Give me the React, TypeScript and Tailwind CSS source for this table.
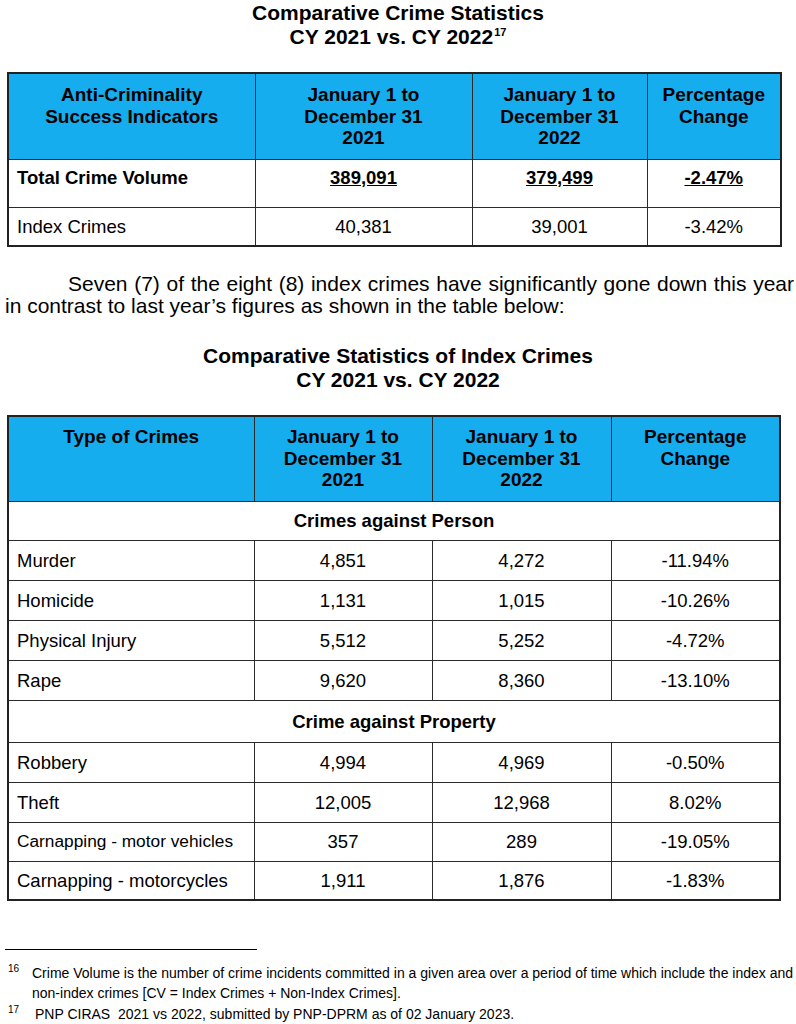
import React from "react";

const th =
  "border border-[#2b2b2b] bg-[#16adee] align-top text-center font-bold text-[19px] leading-[21.5px] text-black";
const td = "border border-[#2b2b2b] text-[18.5px] leading-[21px] text-black align-middle";

function Table1() {
  return (
    <table className="ml-[7px] mt-[23px] w-[773px] table-fixed border-collapse border-2 border-[#222]">
      <colgroup>
        <col className="w-[247px]" />
        <col className="w-[217px]" />
        <col className="w-[175px]" />
        <col className="w-[134px]" />
      </colgroup>
      <thead>
        <tr className="h-[86px]">
          <th className={`${th} pt-[10px]`}>
            Anti-Criminality
            <br />
            Success Indicators
          </th>
          <th className={`${th} pt-[10px]`}>
            January 1 to
            <br />
            December 31
            <br />
            2021
          </th>
          <th className={`${th} pt-[10px]`}>
            January 1 to
            <br />
            December 31
            <br />
            2022
          </th>
          <th className={`${th} pt-[10px]`}>
            Percentage
            <br />
            Change
          </th>
        </tr>
      </thead>
      <tbody>
        <tr className="h-[48px]">
          <td className={`${td} !align-top pt-[7px] pl-[8px] font-bold`}>Total Crime Volume</td>
          <td className={`${td} !align-top pt-[7px] text-center font-bold underline`}>389,091</td>
          <td className={`${td} !align-top pt-[7px] text-center font-bold underline`}>379,499</td>
          <td className={`${td} !align-top pt-[7px] text-center font-bold underline`}>-2.47%</td>
        </tr>
        <tr className="h-[39px]">
          <td className={`${td} pl-[8px]`}>Index Crimes</td>
          <td className={`${td} text-center`}>40,381</td>
          <td className={`${td} text-center`}>39,001</td>
          <td className={`${td} text-center`}>-3.42%</td>
        </tr>
      </tbody>
    </table>
  );
}

type Row = { name: string; a: string; b: string; c: string; h: string; small?: boolean };

const person: Row[] = [
  { name: "Murder", a: "4,851", b: "4,272", c: "-11.94%", h: "h-[40px]" },
  { name: "Homicide", a: "1,131", b: "1,015", c: "-10.26%", h: "h-[40px]" },
  { name: "Physical Injury", a: "5,512", b: "5,252", c: "-4.72%", h: "h-[40px]" },
  { name: "Rape", a: "9,620", b: "8,360", c: "-13.10%", h: "h-[40px]" },
];

const property: Row[] = [
  { name: "Robbery", a: "4,994", b: "4,969", c: "-0.50%", h: "h-[40px]" },
  { name: "Theft", a: "12,005", b: "12,968", c: "8.02%", h: "h-[40px]" },
  { name: "Carnapping - motor vehicles", a: "357", b: "289", c: "-19.05%", h: "h-[39px]", small: true },
  { name: "Carnapping - motorcycles", a: "1,911", b: "1,876", c: "-1.83%", h: "h-[39px]" },
];

function DataRow({ r }: { r: Row }) {
  return (
    <tr className={r.h}>
      <td className={`${td} pl-[8px] ${r.small ? "!text-[17.3px]" : ""}`}>{r.name}</td>
      <td className={`${td} text-center`}>{r.a}</td>
      <td className={`${td} text-center`}>{r.b}</td>
      <td className={`${td} text-center`}>{r.c}</td>
    </tr>
  );
}

function Table2() {
  return (
    <table className="ml-[7px] mt-[23px] w-[772px] table-fixed border-collapse border-2 border-[#222]">
      <colgroup>
        <col className="w-[246px]" />
        <col className="w-[178px]" />
        <col className="w-[179px]" />
        <col className="w-[169px]" />
      </colgroup>
      <thead>
        <tr className="h-[85px]">
          <th className={`${th} pt-[9px]`}>Type of Crimes</th>
          <th className={`${th} pt-[9px]`}>
            January 1 to
            <br />
            December 31
            <br />
            2021
          </th>
          <th className={`${th} pt-[9px]`}>
            January 1 to
            <br />
            December 31
            <br />
            2022
          </th>
          <th className={`${th} pt-[9px]`}>
            Percentage
            <br />
            Change
          </th>
        </tr>
      </thead>
      <tbody>
        <tr className="h-[39px]">
          <td colSpan={4} className={`${td} text-center font-bold`}>
            Crimes against Person
          </td>
        </tr>
        {person.map((r) => (
          <DataRow key={r.name} r={r} />
        ))}
        <tr className="h-[42px]">
          <td colSpan={4} className={`${td} text-center font-bold`}>
            Crime against Property
          </td>
        </tr>
        {property.map((r) => (
          <DataRow key={r.name} r={r} />
        ))}
      </tbody>
    </table>
  );
}

export default function App() {
  return (
    <div className="w-[796px] h-[1024px] overflow-hidden bg-white font-['Liberation_Sans',Arial,sans-serif] text-black">
      <div className="pt-[1px] text-center text-[21px] leading-[24px] font-bold">
        <div>Comparative Crime Statistics</div>
        <div>
          CY 2021 vs. CY 2022
          <span className="relative -top-[8px] ml-[1px] text-[11px] leading-none font-bold">17</span>
        </div>
      </div>

      <Table1 />

      <p className="mt-[26px] ml-[5px] w-[789px] text-[21px] leading-[22px] text-justify indent-[63px]">
        Seven (7) of the eight (8) index crimes have significantly gone down this year in contrast
        to last year’s figures as shown in the table below:
      </p>

      <div className="mt-[27px] text-center text-[21px] leading-[24px] font-bold">
        <div>Comparative Statistics of Index Crimes</div>
        <div>CY 2021 vs. CY 2022</div>
      </div>

      <Table2 />

      <div className="mt-[48px] ml-[5px] w-[252px] h-[1px] bg-black" />

      <div className="mt-[13px] text-[14px] leading-[20px]">
        <div className="flex">
          <span className="w-[32px] pl-[8px] text-[10px] leading-[12px] shrink-0">16</span>
          <span className="whitespace-nowrap">
            Crime Volume is the number of crime incidents committed in a given area over a period of
            time which include the index and
            <br />
            non-index crimes [CV = Index Crimes + Non-Index Crimes].
          </span>
        </div>
        <div className="flex mt-[1px]">
          <span className="w-[35px] pl-[8px] text-[10px] leading-[12px] shrink-0">17</span>
          <span>PNP CIRAS&nbsp; 2021 vs 2022, submitted by PNP-DPRM as of 02 January 2023.</span>
        </div>
      </div>
    </div>
  );
}
